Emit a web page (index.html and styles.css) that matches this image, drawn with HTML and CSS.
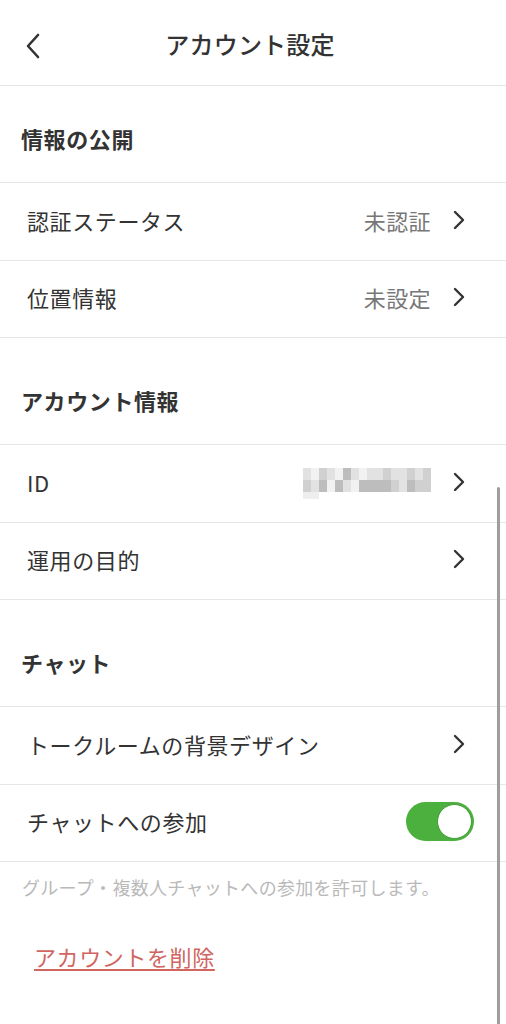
FILE: index.html
```html
<!DOCTYPE html>
<html lang="ja">
<head>
<meta charset="utf-8">
<title>アカウント設定</title>
<link rel="stylesheet" href="styles.css">
</head>
<body>
<div class="screen">
  <header class="nav">
    <span class="back">
      <svg width="16" height="26" viewBox="0 0 16 26"><path d="M13 2 L3 13 L13 24" fill="none" stroke="#333" stroke-width="2.6" stroke-linecap="round" stroke-linejoin="round"/></svg>
    </span>
    <h1 class="nav-title">アカウント設定</h1>
  </header>

  <div class="section-title first">情報の公開</div>
  <div class="row">
    <span class="label">認証ステータス</span>
    <span class="value">未認証</span>
    <span class="chev"><svg width="14" height="20" viewBox="0 0 14 20"><path d="M3 2 L11 10 L3 18" fill="none" stroke="#333" stroke-width="2.4" stroke-linecap="round" stroke-linejoin="round"/></svg></span>
  </div>
  <div class="row">
    <span class="label">位置情報</span>
    <span class="value">未設定</span>
    <span class="chev"><svg width="14" height="20" viewBox="0 0 14 20"><path d="M3 2 L11 10 L3 18" fill="none" stroke="#333" stroke-width="2.4" stroke-linecap="round" stroke-linejoin="round"/></svg></span>
  </div>

  <div class="section-title">アカウント情報</div>
  <div class="row">
    <span class="label">ID</span>
    <span class="mosaic">
      <span class="mrow">
        <i class="c1"></i><i class="c0"></i><i class="c2"></i><i class="c1"></i><i class="c0"></i><i class="c3"></i><i class="c1"></i><i class="c0"></i><i class="c1"></i><i class="c1"></i><i class="c2"></i><i class="c1"></i><i class="c1"></i><i class="c2"></i><i class="c1"></i><i class="c2"></i>
      </span>
      <span class="mrow">
        <i class="c2"></i><i class="c1"></i><i class="c3"></i><i class="c0"></i><i class="c3"></i><i class="c1"></i><i class="c0"></i><i class="c3"></i><i class="c3"></i><i class="c3"></i><i class="c3"></i><i class="c2"></i><i class="c1"></i><i class="c3"></i><i class="c2"></i><i class="c2"></i>
      </span>
      <span class="mrow short">
        <i class="c0"></i><i class="c1"></i>
      </span>
    </span>
    <span class="chev"><svg width="14" height="20" viewBox="0 0 14 20"><path d="M3 2 L11 10 L3 18" fill="none" stroke="#333" stroke-width="2.4" stroke-linecap="round" stroke-linejoin="round"/></svg></span>
  </div>
  <div class="row">
    <span class="label">運用の目的</span>
    <span class="chev"><svg width="14" height="20" viewBox="0 0 14 20"><path d="M3 2 L11 10 L3 18" fill="none" stroke="#333" stroke-width="2.4" stroke-linecap="round" stroke-linejoin="round"/></svg></span>
  </div>

  <div class="section-title">チャット</div>
  <div class="row">
    <span class="label">トークルームの背景デザイン</span>
    <span class="chev"><svg width="14" height="20" viewBox="0 0 14 20"><path d="M3 2 L11 10 L3 18" fill="none" stroke="#333" stroke-width="2.4" stroke-linecap="round" stroke-linejoin="round"/></svg></span>
  </div>
  <div class="row">
    <span class="label">チャットへの参加</span>
    <span class="toggle"><span class="knob"></span></span>
  </div>

  <p class="note">グループ・複数人チャットへの参加を許可します。</p>

  <a class="delete">アカウントを削除</a>

  <div class="scrollbar"></div>
</div>
</body>
</html>
```

FILE: styles.css
```css
* { box-sizing: border-box; }
html, body { margin: 0; padding: 0; background: #fff; }
body {
  font-family: "Noto Sans CJK JP", "Noto Sans", sans-serif;
  color: #333;
}
.screen {
  position: relative;
  width: 506px;
  height: 1024px;
  overflow: hidden;
}
.nav {
  height: 86px;
  border-bottom: 1px solid #e6e6e6;
  display: flex;
  align-items: center;
  justify-content: center;
  position: relative;
}
.back {
  position: absolute;
  left: 25px;
  top: 33px;
  display: flex;
}
.nav-title {
  margin: 0 6px 0 0;
  font-size: 24px;
  font-weight: 500;
  line-height: 30px;
  letter-spacing: 0.2px;
  color: #333;
  padding-top: 2px;
}
.section-title {
  font-size: 22px;
  font-weight: 700;
  line-height: 28px;
  letter-spacing: 0.6px;
  padding: 48px 21px 30px;
  border-bottom: 1px solid #e6e6e6;
  color: #333;
}
.section-title.first { padding-top: 38px; }
.row {
  height: 77.5px;
  border-bottom: 1px solid #e6e6e6;
  display: flex;
  align-items: center;
  padding: 0 40px 3px 27px;
}
.label {
  flex: 1;
  font-size: 22px;
  line-height: 28px;
  letter-spacing: 0.6px;
  color: #333;
}
.value {
  font-size: 22px;
  line-height: 28px;
  letter-spacing: 0.4px;
  color: #777;
  margin-right: 21px;
}
.chev { display: flex; }
.mosaic {
  display: flex;
  flex-direction: column;
  margin-right: 21px;
  margin-top: 4px;
}
.mrow { display: flex; }
.mrow i { display: block; width: 8px; height: 12px; }
.mrow.short i { height: 7px; background: #eee; }
.c0 { background: #f2f2f2; }
.c1 { background: #e2e2e2; }
.c2 { background: #d0d0d0; }
.c3 { background: #bdbdbd; }
.toggle {
  width: 68px;
  height: 39px;
  border-radius: 20px;
  background: #4cb03e;
  display: flex;
  align-items: center;
  justify-content: flex-end;
  padding-right: 2px;
  margin-right: -8px;
}
.knob {
  width: 35px;
  height: 35px;
  border-radius: 50%;
  background: #fff;
  border: 1px solid #3f9a33;
}
.note {
  margin: 0;
  padding: 12px 22px 0;
  font-size: 18px;
  line-height: 26px;
  letter-spacing: 0.3px;
  color: #b9b9b9;
}
.delete {
  display: inline-block;
  margin: 42px 0 0 34px;
  font-size: 22px;
  line-height: 28px;
  letter-spacing: 0.6px;
  color: #d0665f;
  text-decoration: underline;
  text-decoration-thickness: 1.5px;
  text-underline-offset: 3px;
}
.scrollbar {
  position: absolute;
  right: 6px;
  top: 487px;
  width: 3px;
  height: 540px;
  background: #9e9e9e;
  border-radius: 2px;
}
```
